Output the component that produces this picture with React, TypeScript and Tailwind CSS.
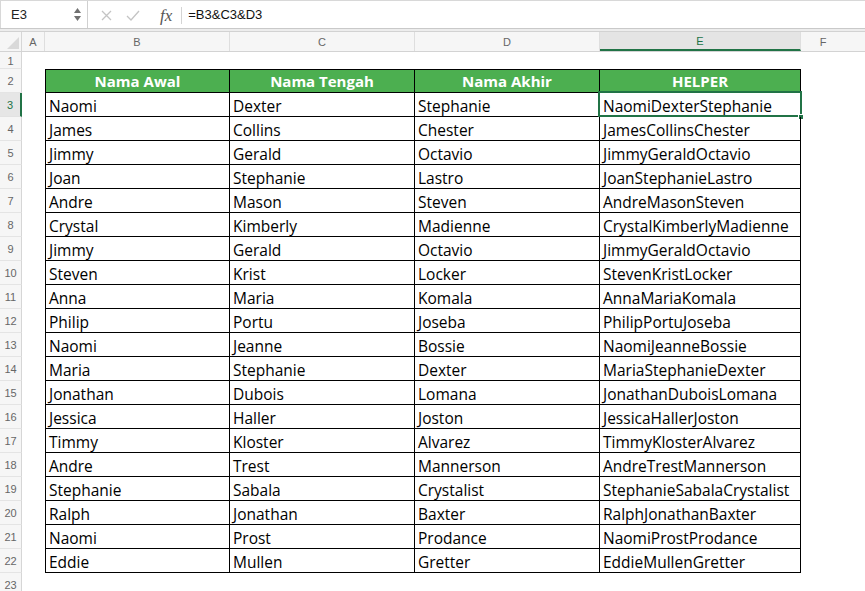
import React from "react";

const data: string[][] = [
  ["Naomi", "Dexter", "Stephanie"],
  ["James", "Collins", "Chester"],
  ["Jimmy", "Gerald", "Octavio"],
  ["Joan", "Stephanie", "Lastro"],
  ["Andre", "Mason", "Steven"],
  ["Crystal", "Kimberly", "Madienne"],
  ["Jimmy", "Gerald", "Octavio"],
  ["Steven", "Krist", "Locker"],
  ["Anna", "Maria", "Komala"],
  ["Philip", "Portu", "Joseba"],
  ["Naomi", "Jeanne", "Bossie"],
  ["Maria", "Stephanie", "Dexter"],
  ["Jonathan", "Dubois", "Lomana"],
  ["Jessica", "Haller", "Joston"],
  ["Timmy", "Kloster", "Alvarez"],
  ["Andre", "Trest", "Mannerson"],
  ["Stephanie", "Sabala", "Crystalist"],
  ["Ralph", "Jonathan", "Baxter"],
  ["Naomi", "Prost", "Prodance"],
  ["Eddie", "Mullen", "Gretter"],
];

function RowHead({ n, active }: { n: number; active?: boolean }) {
  return (
    <div
      className={
        active
          ? "w-[22px] shrink-0 flex items-center justify-center pt-[2px] bg-[#e6e6e6] border-r-2 border-r-[#217346] border-b border-b-[#e2e2e2] text-[11px] text-[#217346] font-['Liberation_Sans',sans-serif]"
          : "w-[22px] shrink-0 flex items-center justify-center pt-[2px] bg-[#f6f6f6] border-r border-r-[#d6d6d6] border-b border-b-[#e4e4e4] text-[11px] text-[#666] font-['Liberation_Sans',sans-serif]"
      }
    >
      {n}
    </div>
  );
}

export default function App() {
  return (
    <div className="w-[865px] h-[591px] overflow-hidden bg-white font-['Open_Sans',sans-serif] text-black">
      {/* formula bar */}
      <div className="h-[29px] flex items-stretch bg-white border-t border-t-[#d8d8d8] border-b border-b-[#c9c9c9]">
        <div className="w-[88px] shrink-0 flex items-center border-r border-r-[#d0d0d0] border-l border-l-[#d8d8d8] relative">
          <span className="pl-[10px] pt-[1px] text-[13px] text-[#222] font-['Liberation_Sans',sans-serif]">E3</span>
          <div className="absolute left-[73px] top-[7px] flex flex-col gap-[3px]">
            <svg width="7" height="5" viewBox="0 0 7 5"><path d="M3.5 0L7 5H0z" fill="#707070" /></svg>
            <svg width="7" height="5" viewBox="0 0 7 5"><path d="M0 0H7L3.5 5z" fill="#707070" /></svg>
          </div>
        </div>
        <div className="flex items-center pl-[12px] pt-[1px]">
          <svg width="11" height="11" viewBox="0 0 11 11" className="ml-[1px]">
            <path d="M1 1L10 10M10 1L1 10" stroke="#c4c4c4" strokeWidth="1.3" fill="none" />
          </svg>
          <svg width="14" height="11" viewBox="0 0 14 11" className="ml-[14px]">
            <path d="M1 6L5 10L13 1" stroke="#c4c4c4" strokeWidth="1.3" fill="none" />
          </svg>
          <span className="ml-[20px] text-[17px] italic text-[#555] font-['Liberation_Serif',serif] leading-none">fx</span>
          <div className="ml-[9px] w-px h-[17px] bg-[#d4d4d4]" />
          <span className="ml-[6px] text-[13px] text-[#111] font-['Liberation_Sans',sans-serif]">=B3&amp;C3&amp;D3</span>
        </div>
      </div>
      <div className="h-[3px] bg-[#ededed] border-b border-b-[#d2d2d2]" />

      {/* column headers */}
      <div className="h-[20px] flex bg-[#f6f6f6] border-b border-b-[#d3d3d3] text-[11px] text-[#666] font-['Liberation_Sans',sans-serif]">
        <div className="w-[22px] shrink-0 border-r border-r-[#d6d6d6] relative">
          <svg width="12" height="12" viewBox="0 0 12 12" className="absolute right-[2px] bottom-[2px]">
            <path d="M12 0V12H0z" fill="#d9d9d9" />
          </svg>
        </div>
        <div className="w-[23px] shrink-0 flex items-center justify-center pt-[2px] border-r border-r-[#dedede]">A</div>
        <div className="w-[185px] shrink-0 flex items-center justify-center pt-[2px] border-r border-r-[#dedede]">B</div>
        <div className="w-[185px] shrink-0 flex items-center justify-center pt-[2px] border-r border-r-[#dedede]">C</div>
        <div className="w-[185px] shrink-0 flex items-center justify-center pt-[2px] border-r border-r-[#dedede]">D</div>
        <div className="w-[201px] shrink-0 flex items-center justify-center pt-[2px] bg-[#e4e4e4] border-b-2 border-b-[#217346] border-r border-r-[#dedede] text-[#217346]">E</div>
        <div className="flex-1 flex items-center justify-center pt-[2px] pr-[20px]">F</div>
      </div>

      {/* row 1 */}
      <div className="h-[17px] flex">
        <RowHead n={1} />
        <div className="flex-1" />
      </div>

      {/* row 2 header */}
      <div className="h-[24px] flex">
        <RowHead n={2} />
        <div className="w-[23px] shrink-0" />
        <div className="w-[185px] shrink-0 flex items-end justify-center pb-[1px] bg-[#4caf50] border border-black text-white font-bold text-[15px] leading-[20px]">Nama Awal</div>
        <div className="w-[185px] shrink-0 flex items-end justify-center pb-[1px] bg-[#4caf50] border-y border-r border-black text-white font-bold text-[15px] leading-[20px]">Nama Tengah</div>
        <div className="w-[185px] shrink-0 flex items-end justify-center pb-[1px] bg-[#4caf50] border-y border-r border-black text-white font-bold text-[15px] leading-[20px]">Nama Akhir</div>
        <div className="w-[201px] shrink-0 flex items-end justify-center pb-[1px] bg-[#4caf50] border-y border-r border-black text-white font-bold text-[15px] leading-[20px]">HELPER</div>
        <div className="flex-1" />
      </div>

      {data.map((r, i) => (
        <div key={i} className="h-[24px] flex">
          <RowHead n={i + 3} active={i === 0} />
          <div className="w-[23px] shrink-0" />
          <div className="w-[185px] shrink-0 flex items-end pl-[3px] border-x border-b border-black text-[15.5px] leading-[20px] whitespace-nowrap">{r[0]}</div>
          <div className="w-[185px] shrink-0 flex items-end pl-[3px] border-r border-b border-black text-[15.5px] leading-[20px] whitespace-nowrap">{r[1]}</div>
          <div className="w-[185px] shrink-0 flex items-end pl-[3px] border-r border-b border-black text-[15.5px] leading-[20px] whitespace-nowrap">{r[2]}</div>
          <div className="w-[201px] shrink-0 relative flex items-end pl-[3px] border-r border-b border-black text-[15.5px] leading-[20px] whitespace-nowrap">
            {r[0] + r[1] + r[2]}
            {i === 0 && (
              <>
                <div className="absolute left-[-2px] top-[-2px] right-[-2px] bottom-[-1px] border-2 border-[#217346] pointer-events-none" />
                <div className="absolute right-[-4px] bottom-[-4px] w-[6px] h-[6px] bg-[#217346] border border-white" />
              </>
            )}
          </div>
          <div className="flex-1" />
        </div>
      ))}

      {/* row 23 */}
      <div className="h-[24px] flex">
        <RowHead n={23} />
        <div className="flex-1" />
      </div>
    </div>
  );
}
